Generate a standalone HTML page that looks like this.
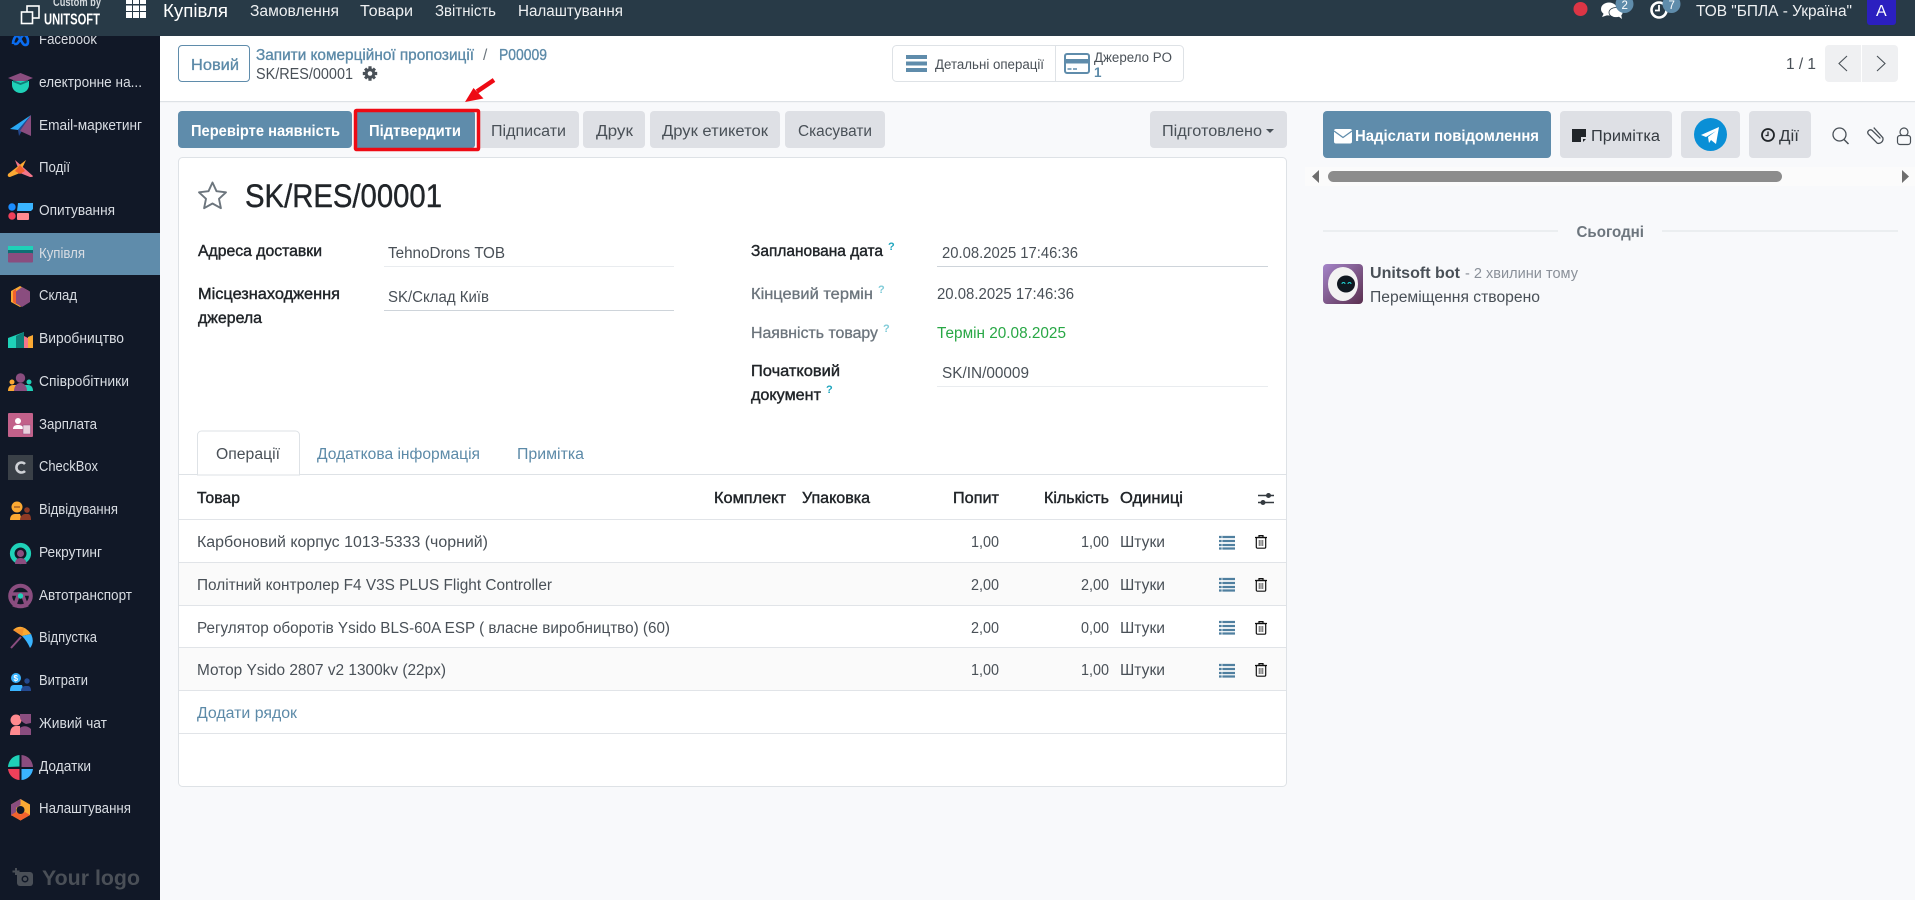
<!DOCTYPE html>
<html lang="uk"><head><meta charset="utf-8"><title>Купівля</title>
<style>
html,body{margin:0;padding:0;width:1915px;height:900px;overflow:hidden;background:#f8f9fb}
svg{display:block;font-family:"Liberation Sans","DejaVu Sans",sans-serif}
text{font-size:15.5px;fill:#495057;white-space:pre}
.s text{fill:#d9dde3;font-size:15px}
.w{fill:#fff}.l{fill:#5c8aa8}
.m{fill:#212529;stroke:#212529;stroke-width:.4px}
.b{font-weight:700}
.q{font-size:11px;font-weight:700;fill:#1ea5bd}
.ql{font-size:11px;font-weight:700;fill:#7fcbd8}
.g{fill:#6c757d}
.mg{fill:#6c757d;stroke:#6c757d;stroke-width:.3px}
</style></head><body>
<svg width="1915" height="900" viewBox="0 0 1915 900" xmlns="http://www.w3.org/2000/svg">
<rect width="1915" height="900" fill="#f8f9fb"/>

<!-- sidebar -->
<rect x="0" y="0" width="160" height="900" fill="#111827"/>
<rect x="0" y="233" width="160" height="42" fill="#5f8cab"/>
<g class="s">
<text x="39" y="44" textLength="58" lengthAdjust="spacingAndGlyphs">Facebook</text>
<text x="39" y="87" textLength="103" lengthAdjust="spacingAndGlyphs">електронне на...</text>
<text x="39" y="130" textLength="103" lengthAdjust="spacingAndGlyphs">Email-маркетинг</text>
<text x="39" y="172" textLength="31" lengthAdjust="spacingAndGlyphs">Події</text>
<text x="39" y="215" textLength="76" lengthAdjust="spacingAndGlyphs">Опитування</text>
<text x="39" y="258" textLength="46" lengthAdjust="spacingAndGlyphs">Купівля</text>
<text x="39" y="300" textLength="38" lengthAdjust="spacingAndGlyphs">Склад</text>
<text x="39" y="343" textLength="85" lengthAdjust="spacingAndGlyphs">Виробництво</text>
<text x="39" y="386" textLength="90" lengthAdjust="spacingAndGlyphs">Співробітники</text>
<text x="39" y="429" textLength="58" lengthAdjust="spacingAndGlyphs">Зарплата</text>
<text x="39" y="471" textLength="59" lengthAdjust="spacingAndGlyphs">CheckBox</text>
<text x="39" y="514" textLength="79" lengthAdjust="spacingAndGlyphs">Відвідування</text>
<text x="39" y="557" textLength="63" lengthAdjust="spacingAndGlyphs">Рекрутинг</text>
<text x="39" y="600" textLength="93" lengthAdjust="spacingAndGlyphs">Автотранспорт</text>
<text x="39" y="642" textLength="58" lengthAdjust="spacingAndGlyphs">Відпустка</text>
<text x="39" y="685" textLength="49" lengthAdjust="spacingAndGlyphs">Витрати</text>
<text x="39" y="728" textLength="68" lengthAdjust="spacingAndGlyphs">Живий чат</text>
<text x="39" y="771" textLength="52" lengthAdjust="spacingAndGlyphs">Додатки</text>
<text x="39" y="813" textLength="92" lengthAdjust="spacingAndGlyphs">Налаштування</text>
</g>
<!-- sidebar icons -->
<path d="M13 44c0-4 2-8 4-8 3 0 5 9 8 9 3 0 3-2 3-4 0-3-2-6-4-6-3 0-5 9-8 9-2 0-3-1-3-0z" fill="none" stroke="#0a6cf0" stroke-width="2.6"/>
<path d="M20.500 73l12.500 5-12.500 5-12.500-5z" fill="#8a4d7f"/><path d="M12 81h17v4a8.500 8 0 0 1-17 0z" fill="#1fd1b8"/><path d="M13 80l7.500 3 7.500-3v2l-7.500 3-7.500-3z" fill="#0e7f78"/>
<path d="M31 115l-21 14 8 1z" fill="#2aa8f5"/><path d="M31 115l-13 15 1 6z" fill="#24498f"/><path d="M31 115v21l-11-5z" fill="#8a4d7f"/>
<path d="M15 160l18 16q0 1-3 1l-10-4z" fill="#f4768a"/><path d="M26 160l-6 13-10 4q-3 0-2-3z" fill="#fba933"/><path d="M20 165l5 6-5 3-5-3z" fill="#f2622e"/>
<circle cx="12" cy="207" r="3.700" fill="#1a8cff"/><circle cx="12" cy="216" r="3.700" fill="#f0405a"/><path d="M18 203h15v6l-2 2H17z" fill="#3ab4ff"/><rect x="17" y="213" width="12" height="7" rx="1" fill="#ff8a8f"/>
<rect x="8" y="246" width="25" height="6" fill="#1fd1b8"/><rect x="8" y="250" width="25" height="4" fill="#0e6f74"/><rect x="8" y="253" width="25" height="9.500" rx="1" fill="#8a4d7f"/>
<path d="M20 286l9 5v11l-9 5-9-5v-11z" fill="#fba933"/><path d="M22 287l8 4.500v10.500l-8 5-6-3.500v-12z" fill="#8a4d7f"/><path d="M16 289l-3 2v11l3 2z" fill="#f2622e"/>
<path d="M8 338l16-6v16H8z" fill="#1fd1b8"/><path d="M16 336l8-4v16h-8z" fill="#0e7f78"/><path d="M24 336l4 2v10h-4z" fill="#f4768a"/><path d="M28 337l5-2v13h-5z" fill="#fba933"/>
<circle cx="20.500" cy="378" r="4.700" fill="#8a4d7f"/><circle cx="12" cy="382" r="2.500" fill="#fba933"/><circle cx="29" cy="382" r="2.500" fill="#1fd1b8"/><path d="M8 391c0-4 2-6 5-6h4v6z" fill="#fba933"/><path d="M33 391c0-4-2-6-5-6h-4v6z" fill="#1fd1b8"/><path d="M14 391c0-5 3-8 6.500-8s6.500 3 6.500 8z" fill="#8a4d7f"/>
<rect x="8" y="413" width="25" height="24" rx="1" fill="#c2618a"/><circle cx="18" cy="421" r="3" fill="#fff"/><path d="M13 429c0-3 2-4 5-4s4 1 5 2v2z" fill="#fff"/><rect x="23" y="425" width="7.500" height="9" fill="#e8d0dc" stroke="#8a4d7f" stroke-width=".5"/>
<rect x="8" y="455" width="25" height="25" fill="#3a4047"/><path d="M25 464a5 5 0 1 0 0 7" fill="none" stroke="#cfd2d6" stroke-width="2.600"/>
<circle cx="17" cy="507" r="5.500" fill="#fba933"/><path d="M14 507h6" stroke="#7a3a22" stroke-width="1"/><circle cx="27" cy="510" r="2.800" fill="#8f3a26"/><path d="M10 520c0-4 2-6 5-6h5l2 6z" fill="#fba933"/><path d="M20 520c0-4 3-6 5-6h3c2 0 3 2 3 6z" fill="#8f3a26"/>
<circle cx="20.500" cy="553.500" r="8.300" fill="none" stroke="#1fd1b8" stroke-width="4.600"/><circle cx="20.500" cy="553.500" r="3.500" fill="#8a4d7f"/><path d="M15 564c0-4 2-6 5.500-6s6 2 6 6z" fill="#8a4d7f"/>
<circle cx="20.500" cy="596" r="10.300" fill="none" stroke="#8a4d7f" stroke-width="4"/><path d="M10 594h21M18 596l-4 11M23 596l4 11" stroke="#8a4d7f" stroke-width="3.500" fill="none"/><circle cx="20.500" cy="596" r="2.700" fill="#1fd1b8"/>
<path d="M11 648l10-11" stroke="#8a4d7f" stroke-width="2"/><path d="M13 630q9-8 18 4l-9 2z" fill="#fba933"/><path d="M13 630l9 6 2-8z" fill="#f2922e"/><path d="M22 636l9-2q4 8-1 14-3-7-8-12z" fill="#3ab4ff"/>
<circle cx="16" cy="678" r="5" fill="#3ab4ff"/><text x="13.500" y="681" style="font-size:8px;font-weight:700;fill:#fff">$</text><circle cx="27" cy="681" r="2.700" fill="#24498f"/><path d="M10 691c0-4 1-6 4-6h8l2 6z" fill="#3ab4ff"/><path d="M21 691c0-3 2-5 4-5h3c2 0 3 2 3 5z" fill="#24498f"/>
<circle cx="16" cy="720" r="5.500" fill="#ff8a8f"/><path d="M10 735c0-6 2-9 6-9h4v9z" fill="#ff8a8f"/><path d="M20 714h11v9l-5 1c-3-1-6-4-6-7z" fill="#8a4d7f"/><path d="M20 735v-7c2-2 7-3 11 1v6z" fill="#8a4d7f"/>
<path d="M8 767a12.500 12.500 0 0 1 11.500-12v11.500z" fill="#1fd1b8"/><path d="M21.500 755a12.500 12.500 0 0 1 11.500 12H21.500z" fill="#8a4d7f"/><path d="M8 769h11.500v11A12.500 12.500 0 0 1 8 769z" fill="#f0405a"/><path d="M21.500 769H33a12.500 12.500 0 0 1-11.500 11z" fill="#3ab4ff"/>
<path d="M20.500 799l9.500 5.500v10.500l-9.500 5.500-9.500-5.500v-10.500z" fill="#fba933"/><path d="M11 804.500l9.500-5.500v6l-4.500 3v5l-5 3z" fill="#8a4d7f"/><path d="M11 815l9.500 5.500 9.500-5.500-5-3-4.500 2.500-4.500-2.500z" fill="#f2622e"/><circle cx="20.500" cy="810" r="4" fill="#111827"/>
<path d="M17 872h13a3 3 0 0 1 3 3v8a3 3 0 0 1-3 3H20a3 3 0 0 1-3-3z" fill="#4a4f57"/><circle cx="25" cy="879" r="3.500" fill="#111827"/><circle cx="25" cy="879" r="2" fill="#4a4f57"/><path d="M16 868v7M12.500 871.500h7" stroke="#4a4f57" stroke-width="2"/>
<text x="42" y="885" textLength="98" lengthAdjust="spacingAndGlyphs" style="font-size:21px;font-weight:700;fill:#4a4f57">Your logo</text>

<!-- top bar -->
<rect x="0" y="0" width="1915" height="36" fill="#283a47"/>
<text x="53" y="6" textLength="48" lengthAdjust="spacingAndGlyphs" style="font-size:12px;font-weight:700;fill:#d5dade">Custom by</text>
<text x="44" y="24.500" textLength="56" lengthAdjust="spacingAndGlyphs" style="font-size:15.500px;font-weight:700;fill:#fff">UNITSOFT</text>
<g fill="none" stroke="#fff" stroke-width="1.600"><rect x="27" y="6" width="12" height="12"/><rect x="21.500" y="12" width="11" height="11.500" fill="#283a47"/></g>
<g fill="#fff"><rect x="126" y="0" width="6" height="4"/><rect x="133" y="0" width="6" height="4"/><rect x="140" y="0" width="6" height="4"/><rect x="126" y="5.500" width="6" height="5.500"/><rect x="133" y="5.500" width="6" height="5.500"/><rect x="140" y="5.500" width="6" height="5.500"/><rect x="126" y="12" width="6" height="6"/><rect x="133" y="12" width="6" height="6"/><rect x="140" y="12" width="6" height="6"/></g>
<text x="163" y="17" textLength="65" lengthAdjust="spacingAndGlyphs" class="w" style="font-size:18.500px">Купівля</text>
<text x="250" y="16" textLength="89" lengthAdjust="spacingAndGlyphs" style="fill:#eef0f2">Замовлення</text>
<text x="360" y="16" textLength="53" lengthAdjust="spacingAndGlyphs" style="fill:#eef0f2">Товари</text>
<text x="435" y="16" textLength="61" lengthAdjust="spacingAndGlyphs" style="fill:#eef0f2">Звітність</text>
<text x="518" y="16" textLength="105" lengthAdjust="spacingAndGlyphs" style="fill:#eef0f2">Налаштування</text>
<circle cx="1580.500" cy="9" r="7" fill="#dc3545"/>
<ellipse cx="1609" cy="9" rx="8" ry="6.500" fill="#fff"/><path d="M1604 13l-2 4 6-2z" fill="#fff"/><ellipse cx="1616" cy="12.500" rx="7" ry="5" fill="#fff" stroke="#283a47" stroke-width=".8"/><path d="M1618 16l4 3-1-5z" fill="#fff"/>
<circle cx="1624.500" cy="4" r="9" fill="#5f8cab"/><text x="1621.500" y="9" class="w" style="font-size:11.500px">2</text>
<circle cx="1659" cy="10" r="7.500" fill="none" stroke="#fff" stroke-width="2.600"/><path d="M1659 5v5.500h-4" fill="none" stroke="#fff" stroke-width="1.800"/>
<circle cx="1671.500" cy="4" r="9" fill="#5f8cab"/><text x="1668.500" y="9" class="w" style="font-size:11.500px">7</text>
<text x="1696" y="16" textLength="156" lengthAdjust="spacingAndGlyphs" style="fill:#eef0f2">ТОВ "БПЛА - Україна"</text>
<path d="M1867 0h29v22a3 3 0 0 1-3 3h-23a3 3 0 0 1-3-3z" fill="#2b1fc0"/><text x="1876" y="16" class="w" style="font-size:16px">A</text>

<!-- control panel -->
<rect x="160" y="36" width="1755" height="65" fill="#fff"/><rect x="160" y="101" width="1755" height="1.200" fill="#dee2e6"/>
<rect x="178.500" y="45.500" width="71" height="36" rx="3.500" fill="#fff" stroke="#5f8cab"/>
<text x="191" y="70" textLength="48" lengthAdjust="spacingAndGlyphs" class="l" style="stroke:#5c8aa8;stroke-width:.3px">Новий</text>
<text x="256" y="60" textLength="218" lengthAdjust="spacingAndGlyphs" class="l" style="stroke:#5c8aa8;stroke-width:.35px">Запити комерційної пропозиції</text>
<text x="483" y="60" class="g">/</text>
<text x="499" y="60" textLength="48" lengthAdjust="spacingAndGlyphs" class="l" style="stroke:#5c8aa8;stroke-width:.35px">P00009</text>
<text x="256" y="79" textLength="97" lengthAdjust="spacingAndGlyphs">SK/RES/00001</text>
<g transform="translate(370 73.500)" fill="#495057"><circle r="5.300"/><path id="tooth" d="M-1.600-7.200h3.200v14.400h-3.200zM-7.200-1.600h14.400v3.200H-7.200z"/><path d="M-1.500-7h3v14h-3zM-7-1.500h14v3H-7z" transform="rotate(45)"/><circle r="2.300" fill="#fff"/></g>

<rect x="892.500" y="45.500" width="291" height="36" rx="4" fill="#fff" stroke="#dee2e6"/><path d="M1055.500 46v35" stroke="#dee2e6"/>
<g fill="#5f8cab"><rect x="906" y="55" width="21" height="4"/><rect x="906" y="61.500" width="21" height="4"/><rect x="906" y="68" width="21" height="4"/></g>
<text x="935" y="69" textLength="109" lengthAdjust="spacingAndGlyphs" style="font-size:13.500px">Детальні операції</text>
<rect x="1065" y="54" width="24" height="19" rx="2" fill="none" stroke="#5f8cab" stroke-width="2"/><rect x="1065" y="59" width="24" height="4.500" fill="#5f8cab"/><path d="M1067.500 69h4M1073 69h4" stroke="#5f8cab" stroke-width="1.500"/>
<text x="1094" y="62" textLength="78" lengthAdjust="spacingAndGlyphs" style="font-size:13.500px">Джерело PO</text>
<text x="1094" y="77" class="l b" style="font-size:13.500px">1</text>

<text x="1786" y="69" textLength="30" lengthAdjust="spacingAndGlyphs">1 / 1</text>
<path d="M1829 45h32v37h-32a4 4 0 0 1-4-4V49a4 4 0 0 1 4-4z" fill="#eff0f2"/><path d="M1862 45h32a4 4 0 0 1 4 4v29a4 4 0 0 1-4 4h-32z" fill="#eff0f2"/>
<path d="M1847 56l-8 7.500 8 7.500M1877 56l8 7.500-8 7.500" fill="none" stroke="#495057" stroke-width="1.100"/>

<!-- action bar -->
<rect x="178" y="111" width="174" height="37" rx="4" fill="#5f8cab"/>
<text x="191" y="136" textLength="149" lengthAdjust="spacingAndGlyphs" class="w b">Перевірте наявність</text>
<rect x="355" y="111" width="120" height="37" rx="3" fill="#5f8cab"/>
<path d="M480 111h95a4 4 0 0 1 4 4v29a4 4 0 0 1-4 4h-95z" fill="#dee0e5"/>
<rect x="355.500" y="110.500" width="123" height="39" rx="1" fill="none" stroke="#ee0a14" stroke-width="3.500"/>
<text x="369" y="136" textLength="92" lengthAdjust="spacingAndGlyphs" class="w b">Підтвердити</text>
<text x="491" y="136" textLength="75" lengthAdjust="spacingAndGlyphs">Підписати</text>
<rect x="583" y="111" width="62" height="37" rx="4" fill="#dee0e5"/><text x="596" y="136" textLength="37" lengthAdjust="spacingAndGlyphs">Друк</text>
<rect x="650" y="111" width="130" height="37" rx="4" fill="#dee0e5"/><text x="662" y="136" textLength="106" lengthAdjust="spacingAndGlyphs">Друк етикеток</text>
<rect x="785" y="111" width="100" height="37" rx="4" fill="#dee0e5"/><text x="798" y="136" textLength="74" lengthAdjust="spacingAndGlyphs">Скасувати</text>
<rect x="1150" y="111" width="137" height="37" rx="4" fill="#dee0e5"/><text x="1162" y="136" textLength="100" lengthAdjust="spacingAndGlyphs">Підготовлено</text><path d="M1266 129h8l-4 4z" fill="#495057"/>
<path d="M494 80l-17 11.500" stroke="#ee0a14" stroke-width="4.500" fill="none"/><path d="M465 102l8.500-14 10 10.500z" fill="#ee0a14"/>

<!-- chatter -->
<rect x="1323" y="111" width="228" height="47" rx="4" fill="#5f8cab"/>
<rect x="1334" y="129" width="18" height="14.500" rx="2" fill="#fff"/><path d="M1334 131l9 6.500 9-6.500" fill="none" stroke="#5f8cab" stroke-width="1.300"/>
<text x="1355" y="141" textLength="184" lengthAdjust="spacingAndGlyphs" class="w b">Надіслати повідомлення</text>
<rect x="1560" y="111" width="112" height="47" rx="4" fill="#dee0e5"/>
<path d="M1572 129h14v8h-5v5h-9z" fill="#212529"/><path d="M1586 139l-3 3v-3z" fill="#212529"/>
<text x="1591" y="141" textLength="69" lengthAdjust="spacingAndGlyphs" style="fill:#343a40">Примітка</text>
<rect x="1681" y="111" width="59" height="47" rx="4" fill="#dee0e5"/><ellipse cx="1710.500" cy="134.500" rx="16.500" ry="16.500" fill="#0a8fd6"/><path d="M1701 135l18-8-3 17-5-4-2 3-1-6 8-6-10 6z" fill="#fff"/>
<rect x="1749" y="111" width="62" height="47" rx="4" fill="#dee0e5"/><circle cx="1768" cy="135" r="6" fill="none" stroke="#212529" stroke-width="1.800"/><path d="M1768 131.500v4h-2.500" fill="none" stroke="#212529" stroke-width="1.300"/>
<text x="1779" y="141" textLength="20" lengthAdjust="spacingAndGlyphs" style="fill:#343a40">Дії</text>
<circle cx="1839.500" cy="134.500" r="6.500" fill="none" stroke="#495057" stroke-width="1.300"/><path d="M1844 139.500l4.500 4.500" stroke="#495057" stroke-width="1.500"/>
<path d="M1880 139l-7.500-9a2.700 2.700 0 0 0-4 3.500l8 10a4.500 4.500 0 0 0 6-5l-8-11" fill="none" stroke="#495057" stroke-width="1.300" transform="rotate(-6 1875 135)"/>
<circle cx="1904" cy="132" r="4" fill="none" stroke="#495057" stroke-width="1.200"/><rect x="1897.500" y="135.500" width="13" height="9" rx="2.500" fill="#f8f9fb" stroke="#495057" stroke-width="1.200"/>
<rect x="1305" y="167" width="610" height="19" fill="#fbfbfb"/><rect x="1328" y="171" width="454" height="11" rx="5.500" fill="#8c8c8c"/>
<path d="M1319 170v13l-7-6.500zM1902 170v13l7-6.500z" fill="#6e6e6e"/>
<path d="M1323 231h235M1662 231h236" stroke="#dee2e6"/>
<text x="1576.500" y="237" textLength="67.500" lengthAdjust="spacingAndGlyphs" class="g b">Сьогодні</text>
<defs><linearGradient id="av" x1="0" y1="0" x2="1" y2="1"><stop offset="0" stop-color="#a585c9"/><stop offset="1" stop-color="#5a2f4f"/></linearGradient></defs>
<rect x="1323" y="264" width="40" height="40" rx="4" fill="url(#av)"/><ellipse cx="1343" cy="284" rx="15" ry="17" fill="#f2f2f2"/><ellipse cx="1346" cy="284" rx="9" ry="8.500" fill="#101820"/><path d="M1342 284a1.500 1.500 0 0 1 3 0M1348 284a1.500 1.500 0 0 1 3 0" stroke="#1fd1d1" fill="none"/>
<text x="1370" y="278" textLength="90" lengthAdjust="spacingAndGlyphs" class="b" style="fill:#495057">Unitsoft bot</text>
<text x="1465" y="278" textLength="113" lengthAdjust="spacingAndGlyphs" style="fill:#8a9099;font-size:14.500px">- 2 хвилини тому</text>
<text x="1370" y="302" textLength="170" lengthAdjust="spacingAndGlyphs">Переміщення створено</text>

<!-- sheet -->
<rect x="178.500" y="157.500" width="1108" height="629" rx="4" fill="#fff" stroke="#dee2e6"/>
<path d="M212.500 182.500l4 8.700 9.500 1.100-7 6.500 1.900 9.400-8.400-4.700-8.400 4.700 1.900-9.400-7-6.500 9.500-1.100z" fill="none" stroke="#6c757d" stroke-width="1.900" stroke-linejoin="round"/>
<text x="245" y="207" textLength="197" lengthAdjust="spacingAndGlyphs" style="font-size:32px;fill:#212529;stroke:#212529;stroke-width:.4px">SK/RES/00001</text>

<text x="198" y="256" textLength="124" lengthAdjust="spacingAndGlyphs" class="m">Адреса доставки</text>
<text x="388" y="258" textLength="117" lengthAdjust="spacingAndGlyphs">TehnoDrons ТОВ</text>
<path d="M384 266.500h290" stroke="#e9ecef"/>
<text x="198" y="299" textLength="142" lengthAdjust="spacingAndGlyphs" class="m">Місцезнаходження</text>
<text x="198" y="323" textLength="64" lengthAdjust="spacingAndGlyphs" class="m">джерела</text>
<text x="388" y="302" textLength="101" lengthAdjust="spacingAndGlyphs">SK/Склад Київ</text>
<path d="M384 310.500h290" stroke="#ced4da"/>

<text x="751" y="256" textLength="132" lengthAdjust="spacingAndGlyphs" class="m">Запланована дата</text><text x="888" y="250" class="q">?</text>
<text x="942" y="258" textLength="136" lengthAdjust="spacingAndGlyphs">20.08.2025 17:46:36</text>
<path d="M937 266.500h331" stroke="#ced4da"/>
<text x="751" y="299" textLength="122" lengthAdjust="spacingAndGlyphs" class="mg">Кінцевий термін</text><text x="878" y="293" class="ql">?</text>
<text x="937" y="299" textLength="137" lengthAdjust="spacingAndGlyphs">20.08.2025 17:46:36</text>
<text x="751" y="338" textLength="127" lengthAdjust="spacingAndGlyphs" class="mg">Наявність товару</text><text x="883" y="332" class="ql">?</text>
<text x="937" y="338" textLength="129" lengthAdjust="spacingAndGlyphs" style="fill:#28a745">Термін 20.08.2025</text>
<text x="751" y="376" textLength="89" lengthAdjust="spacingAndGlyphs" class="m">Початковий</text>
<text x="751" y="400" textLength="70" lengthAdjust="spacingAndGlyphs" class="m">документ</text><text x="826" y="393" class="q">?</text>
<text x="942" y="378" textLength="87" lengthAdjust="spacingAndGlyphs">SK/IN/00009</text>
<path d="M937 386.500h331" stroke="#e9ecef"/>

<!-- tabs -->
<path d="M179 474.500h1107" stroke="#dee2e6"/>
<path d="M197.500 475v-40a4 4 0 0 1 4-4h94a4 4 0 0 1 4 4v40z" fill="#fff" stroke="#dee2e6"/>
<text x="216" y="459" textLength="64" lengthAdjust="spacingAndGlyphs">Операції</text>
<text x="317" y="459" textLength="163" lengthAdjust="spacingAndGlyphs" class="l">Додаткова інформація</text>
<text x="517" y="459" textLength="67" lengthAdjust="spacingAndGlyphs" class="l">Примітка</text>

<!-- table -->
<rect x="179" y="562" width="1107" height="43" fill="#fafafa"/><rect x="179" y="647" width="1107" height="43" fill="#fafafa"/>
<path d="M179 519.500h1107M179 562.500h1107M179 605.500h1107M179 647.500h1107M179 690.500h1107M179 733.500h1107" stroke="#e1e4e8"/>
<text x="197" y="503" textLength="43" lengthAdjust="spacingAndGlyphs" class="m">Товар</text>
<text x="714" y="503" textLength="72" lengthAdjust="spacingAndGlyphs" class="m">Комплект</text>
<text x="802" y="503" textLength="68" lengthAdjust="spacingAndGlyphs" class="m">Упаковка</text>
<text x="953" y="503" textLength="46" lengthAdjust="spacingAndGlyphs" class="m">Попит</text>
<text x="1044" y="503" textLength="65" lengthAdjust="spacingAndGlyphs" class="m">Кількість</text>
<text x="1120" y="503" textLength="63" lengthAdjust="spacingAndGlyphs" class="m">Одиниці</text>
<path d="M1258 495.500h16M1258 502.500h16" stroke="#343a40" stroke-width="1.400"/><circle cx="1268.500" cy="495.500" r="2.500" fill="#343a40"/><circle cx="1263" cy="502.500" r="2.500" fill="#343a40"/>

<text x="197" y="547" textLength="291" lengthAdjust="spacingAndGlyphs">Карбоновий корпус 1013-5333 (чорний)</text>
<text x="971" y="547" textLength="28" lengthAdjust="spacingAndGlyphs">1,00</text><text x="1081" y="547" textLength="28" lengthAdjust="spacingAndGlyphs">1,00</text><text x="1120" y="547" textLength="45" lengthAdjust="spacingAndGlyphs">Штуки</text>
<text x="197" y="590" textLength="355" lengthAdjust="spacingAndGlyphs">Політний контролер F4 V3S PLUS Flight Controller</text>
<text x="971" y="590" textLength="28" lengthAdjust="spacingAndGlyphs">2,00</text><text x="1081" y="590" textLength="28" lengthAdjust="spacingAndGlyphs">2,00</text><text x="1120" y="590" textLength="45" lengthAdjust="spacingAndGlyphs">Штуки</text>
<text x="197" y="633" textLength="473" lengthAdjust="spacingAndGlyphs">Регулятор оборотів Ysido BLS-60A ESP ( власне виробництво) (60)</text>
<text x="971" y="633" textLength="28" lengthAdjust="spacingAndGlyphs">2,00</text><text x="1081" y="633" textLength="28" lengthAdjust="spacingAndGlyphs">0,00</text><text x="1120" y="633" textLength="45" lengthAdjust="spacingAndGlyphs">Штуки</text>
<text x="197" y="675" textLength="249" lengthAdjust="spacingAndGlyphs">Мотор Ysido 2807 v2 1300kv (22px)</text>
<text x="971" y="675" textLength="28" lengthAdjust="spacingAndGlyphs">1,00</text><text x="1081" y="675" textLength="28" lengthAdjust="spacingAndGlyphs">1,00</text><text x="1120" y="675" textLength="45" lengthAdjust="spacingAndGlyphs">Штуки</text>
<text x="197" y="718" textLength="100" lengthAdjust="spacingAndGlyphs" class="l">Додати рядок</text>

<defs>
<g id="li"><path d="M0 1h16M0 5h16M0 9h16M0 12.500h16" stroke="#4f7f9f" stroke-width="2.200"/><path d="M3 0v14" stroke="#fff" stroke-width=".7"/></g>
<g id="tr" fill="none" stroke="#111" stroke-width="1.200"><path d="M0 2.500h12M4 2.500V.6h4v1.900"/><rect x="1.300" y="2.500" width="9.400" height="10.700" rx="1.200"/><path d="M4.300 5v6M6 5v6M7.700 5v6" stroke="#777"/></g>
</defs>
<use href="#li" x="1219" y="536"/><use href="#li" x="1219" y="578"/><use href="#li" x="1219" y="621"/><use href="#li" x="1219" y="664"/>
<use href="#tr" x="1255" y="535"/><use href="#tr" x="1255" y="578"/><use href="#tr" x="1255" y="621"/><use href="#tr" x="1255" y="663"/>
</svg>
</body></html>
